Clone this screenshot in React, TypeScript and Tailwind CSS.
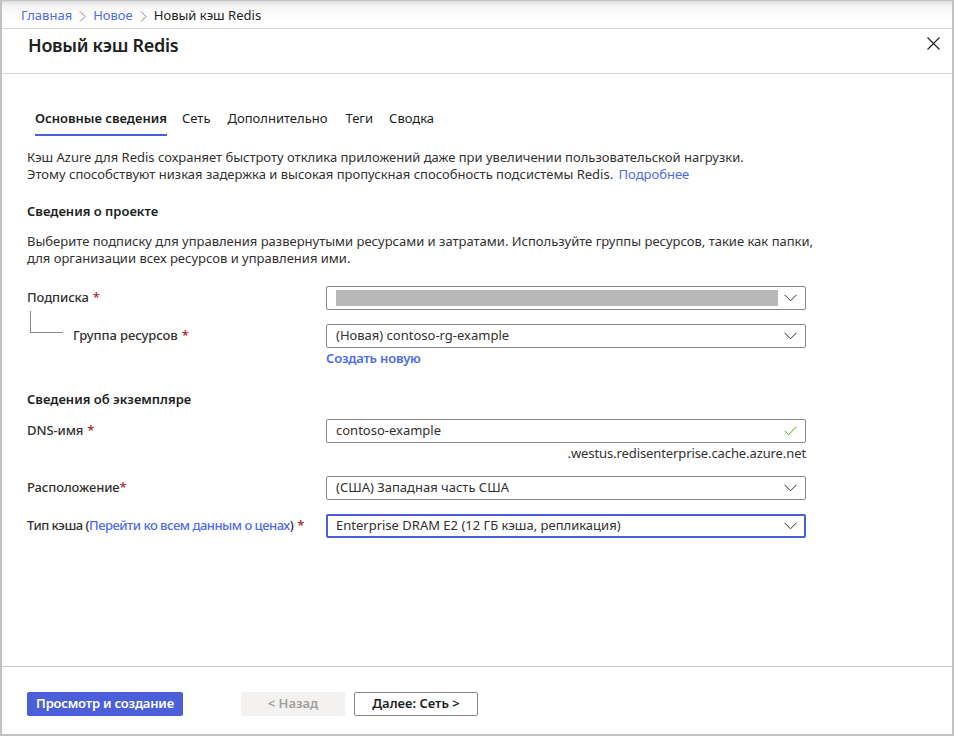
// Azure portal — "Новый кэш Redis" create blade, Basics tab.

const FONT = "font-['Segoe_UI','Noto_Sans','Open_Sans',sans-serif]";

function Chevron() {
  return (
    <svg width="13" height="8" viewBox="0 0 13 8" className="shrink-0">
      <path d="M0.5 0.8 L6.5 6.8 L12.5 0.8" fill="none" stroke="#323130" strokeWidth="1" />
    </svg>
  );
}

function Crumb() {
  return (
    <svg width="7" height="11" viewBox="0 0 7 11" className="shrink-0 mx-[7px]">
      <path d="M1 0.5 L6 5.5 L1 10.5" fill="none" stroke="#8a8886" strokeWidth="1" />
    </svg>
  );
}

function Req() {
  return <span className="text-[#a4262c] ml-1">*</span>;
}

function Dropdown({ children, focused }: { children: React.ReactNode; focused?: boolean }) {
  return (
    <div
      className={
        focused
          ? "flex items-center h-[24px] w-[480px] pl-[8px] pr-[7px] border-2 border-[#4b5fd8] rounded-[2px]"
          : "flex items-center h-[24px] w-[480px] pl-[9px] pr-[8px] border border-[#8a8886] rounded-[2px]"
      }
    >
      <div className="flex-1 min-w-0 truncate">{children}</div>
      <Chevron />
    </div>
  );
}

function Row({ label, children, className }: { label: React.ReactNode; children: React.ReactNode; className?: string }) {
  return (
    <div className={"flex items-center " + (className ?? "")}>
      <div className="w-[299px] shrink-0 font-medium whitespace-nowrap tracking-[-0.1px]">{label}</div>
      {children}
    </div>
  );
}

export default function App() {
  const tabs = [
    { t: "Основные сведения", cls: "font-semibold border-b-2 border-[#4b5fd8]" },
    { t: "Сеть", cls: "ml-[15px]" },
    { t: "Дополнительно", cls: "ml-[17px]" },
    { t: "Теги", cls: "ml-[18px]" },
    { t: "Сводка", cls: "ml-[16px]" },
  ];
  return (
    <div className={`${FONT} w-[954px] h-[736px] bg-white text-[13px] text-[#323130] flex flex-col border-l-2 border-r-2 border-b-2 border-[#c2c2c2]`}>
      {/* breadcrumb */}
      <div className="h-[29px] shrink-0 flex items-center pl-[19px] pt-[4px] border-b border-[#d4d4d4] bg-[linear-gradient(to_bottom,#b9b9b9_0px,#e6e6e6_2px,#f5f5f5_6px,#fcfcfc_14px,#fff_22px)]">
        <span className="text-[#4f6bed]">Главная</span>
        <Crumb />
        <span className="text-[#4f6bed]">Новое</span>
        <Crumb />
        <span className="text-[#201f1e]">Новый кэш Redis</span>
      </div>

      {/* title */}
      <div className="h-[45px] shrink-0 flex items-start justify-between pl-[26px] pr-[12px] border-b border-[#d4d4d4]">
        <h1 className="text-[18px] font-semibold text-[#201f1e] mt-[3px] tracking-[-0.3px]">Новый кэш Redis</h1>
        <svg width="13" height="13" viewBox="0 0 13 13" className="mt-[8px]">
          <path d="M0.5 0.5 L12.5 12.5 M12.5 0.5 L0.5 12.5" stroke="#201f1e" strokeWidth="1.1" />
        </svg>
      </div>

      {/* body */}
      <div className="flex-1 pl-[25px] pt-[34px]">
        <div className="flex pl-[8px] h-[28px]">
          {tabs.map((x) => (
            <div key={x.t} className={"text-[#201f1e] pt-[1px] " + x.cls}>
              {x.t}
            </div>
          ))}
        </div>

        <p className="mt-[13px] leading-[17px]">
          Кэш Azure для Redis сохраняет быстроту отклика приложений даже при увеличении пользовательской нагрузки.
          <br />
          Этому способствуют низкая задержка и высокая пропускная способность подсистемы Redis.{" "}
          <span className="text-[#4f6bed] ml-[2px]">Подробнее</span>
        </p>

        <h2 className="font-semibold text-[#201f1e] mt-[20px] leading-[17px]">Сведения о проекте</h2>

        <p className="mt-[13px] leading-[17px]">
          Выберите подписку для управления развернутыми ресурсами и затратами. Используйте группы ресурсов, такие как папки,
          <br />
          для организации всех ресурсов и управления ими.
        </p>

        <Row className="mt-[19px]" label={<>Подписка<Req /></>}>
          <Dropdown>
            <div className="h-[16px] w-[447px] -ml-[5px] bg-[#b8b8b8]" />
          </Dropdown>
        </Row>

        <div className="flex items-start mt-[14px]">
          <div className="w-[299px] shrink-0 flex items-start">
            <div className="w-[33px] h-[22px] -mt-[13px] ml-[3px] border-l border-b border-[#8a8886] mr-[10px]" />
            <div className="font-medium h-[24px] flex items-center whitespace-nowrap tracking-[-0.1px]">
              Группа ресурсов<Req />
            </div>
          </div>
          <div>
            <Dropdown>(Новая) contoso-rg-example</Dropdown>
            <div className="text-[#4f6bed] font-semibold mt-[1px] leading-[18px] tracking-[-0.2px]">Создать новую</div>
          </div>
        </div>

        <h2 className="font-semibold text-[#201f1e] mt-[24px] leading-[17px]">Сведения об экземпляре</h2>

        <Row className="mt-[11px]" label={<>DNS-имя<Req /></>}>
          <div className="flex items-center h-[24px] w-[480px] pl-[9px] pr-[8px] border border-[#8a8886] rounded-[2px]">
            <div className="flex-1">contoso-example</div>
            <svg width="13" height="10" viewBox="0 0 13 10">
              <path d="M0.7 5 L4.5 8.8 L12.3 1" fill="none" stroke="#57a300" strokeWidth="1" />
            </svg>
          </div>
        </Row>
        <div className="w-[779px] text-right mt-[2px] leading-[17px] tracking-[-0.1px]">.westus.redisenterprise.cache.azure.net</div>

        <Row className="mt-[14px]" label={<>Расположение<span className="text-[#a4262c]">*</span></>}>
          <Dropdown>(США) Западная часть США</Dropdown>
        </Row>

        <Row
          className="mt-[14px]"
          label={
            <span className="tracking-[-0.5px]">
              Тип кэша (<span className="text-[#4f6bed]">Перейти ко всем данным о ценах</span>)
              <span className="text-[#a4262c] ml-[4px]">*</span>
            </span>
          }
        >
          <Dropdown focused>Enterprise DRAM E2 (12 ГБ кэша, репликация)</Dropdown>
        </Row>
      </div>

      {/* footer */}
      <div className="h-[68px] shrink-0 border-t border-[#c8c8c8] flex items-start pl-[25px] pt-[25px]">
        <button className="h-[24px] bg-[#4b5fd8] text-white font-semibold rounded-[2px] w-[156px] whitespace-nowrap tracking-[-0.2px]">
          Просмотр и создание
        </button>
        <button className="h-[24px] ml-[58px] w-[104px] bg-[#f3f2f1] text-[#a19f9d] font-semibold rounded-[2px] whitespace-nowrap">
          &lt; Назад
        </button>
        <button className="h-[24px] ml-[9px] w-[124px] border border-[#8a8886] text-[#201f1e] font-semibold rounded-[2px] whitespace-nowrap">
          Далее: Сеть &gt;
        </button>
      </div>
    </div>
  );
}
